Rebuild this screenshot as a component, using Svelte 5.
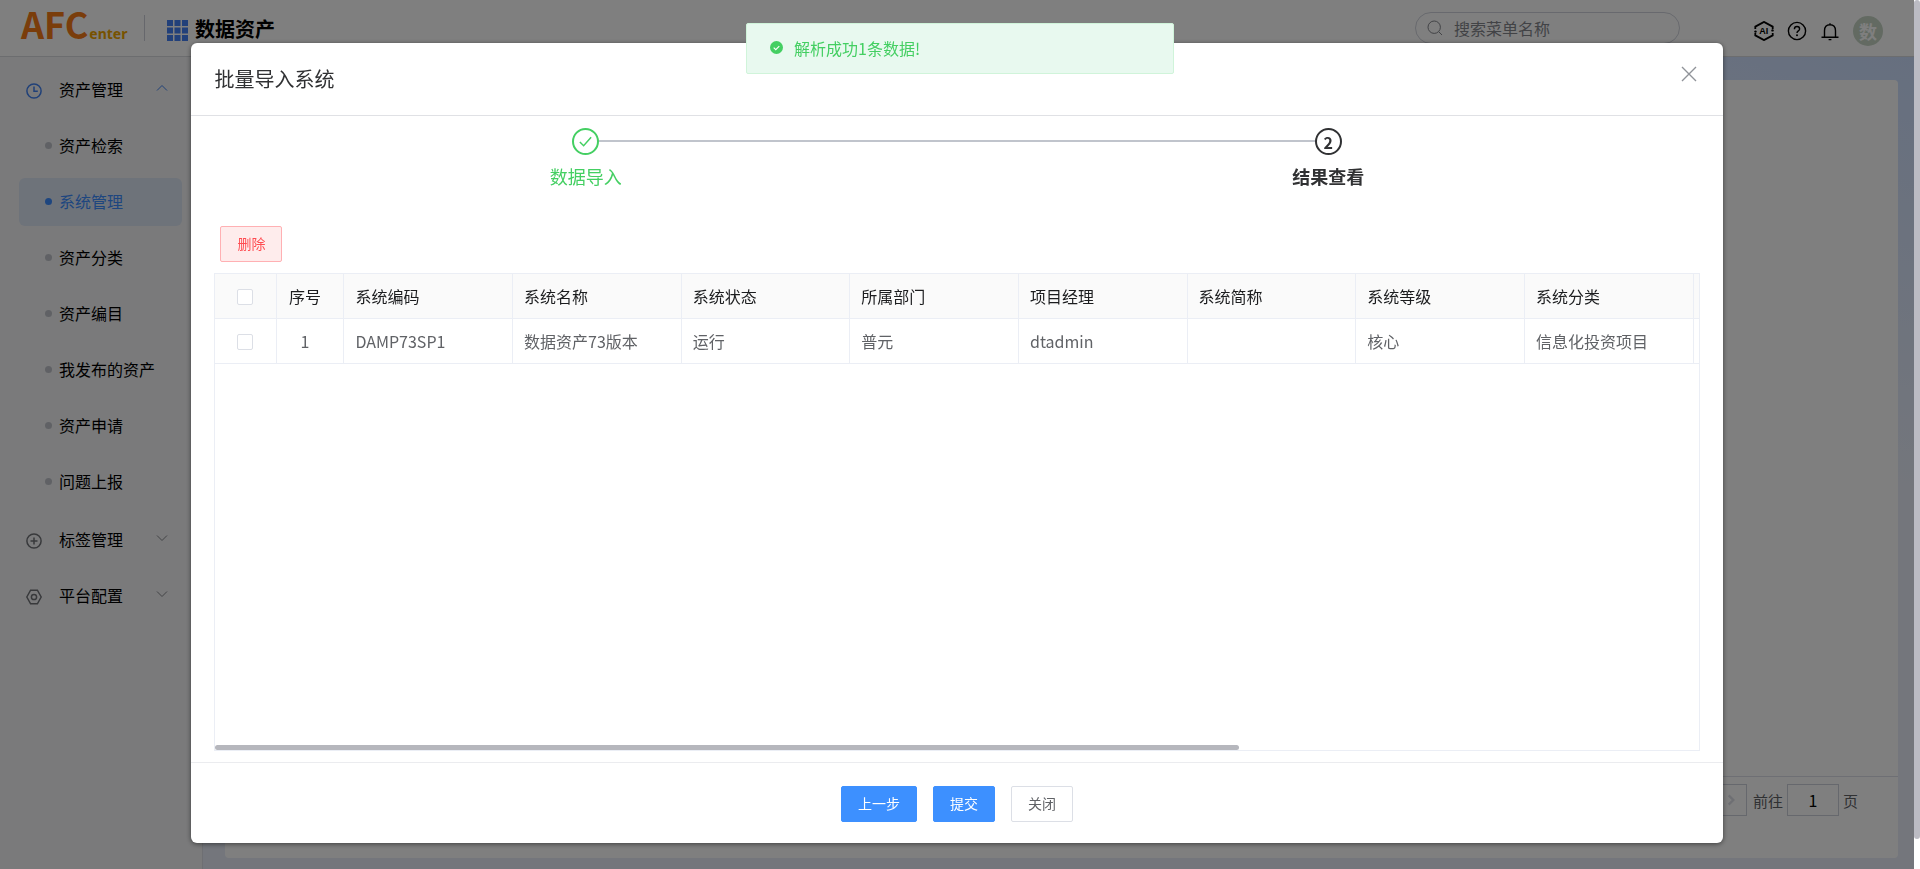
<script lang="ts">
    type Row = { checked: boolean; cells: string[] };

    const subMenus = ["资产检索", "系统管理", "资产分类", "资产编目", "我发布的资产", "资产申请", "问题上报"];
    const columns = ["系统编码", "系统名称", "系统状态", "所属部门", "项目经理", "系统简称", "系统等级", "系统分类"];

    let active = $state("系统管理");
    let opened = $state(true);
    let keyword = $state("");
    let pageNo = $state("1");
    let rows = $state<Row[]>([
        { checked: false, cells: ["DAMP73SP1", "数据资产73版本", "运行", "普元", "dtadmin", "", "核心", "信息化投资项目"] },
    ]);
    let allChecked = $derived(rows.length > 0 && rows.every((r) => r.checked));

    function toggleAll() {
        const next = !allChecked;
        rows.forEach((r) => (r.checked = next));
    }

    function removeChecked() {
        rows = rows.filter((r) => !r.checked);
    }
</script>

{#snippet chevron(up: boolean)}
    <svg class="chevron" class:up viewBox="0 0 12 12"><path d="M1 3.5 6 8.5 11 3.5" /></svg>
{/snippet}

<div class="page">
    <header class="topbar">
        <div class="logo"><span class="logo-main">AFC</span><span class="logo-sub">enter</span></div>
        <div class="divider"></div>
        <svg class="apps" viewBox="0 0 21 21">
            {#each [0, 1, 2] as r}
                {#each [0, 1, 2] as c}
                    <rect x={c * 7.5} y={r * 7.5} width="6" height="6" />
                {/each}
            {/each}
        </svg>
        <h1>数据资产</h1>
        <label class="search">
            <svg viewBox="0 0 16 16"><circle cx="7.2" cy="7.2" r="6.2" /><path d="m11.8 11.8 3.2 3.2" /></svg>
            <input type="text" placeholder="搜索菜单名称" aria-label="搜索菜单名称" bind:value={keyword} />
        </label>
        <nav class="tools">
            <button class="tool" aria-label="AI">
                <svg viewBox="0 0 20 20">
                    <path d="M1.3 8V5.6L10 .9l8.7 4.7V8M1.3 12v2.4L10 19.1l8.7-4.7V12" stroke-width="1.8" />
                    <circle cx="1.5" cy="10.6" r="1.2" class="dot" />
                    <circle cx="18.5" cy="9.4" r="1.2" class="dot" />
                    <text x="9.8" y="13.4">AI</text>
                </svg>
            </button>
            <button class="tool" aria-label="帮助">
                <svg viewBox="0 0 20 20">
                    <circle cx="10" cy="10" r="8.6" />
                    <path d="M7.4 8.2c0-1.6 1.1-2.7 2.6-2.7s2.6 1 2.6 2.4c0 2-2.6 2-2.6 4.1" />
                    <circle cx="10" cy="14.3" r="1" class="dot" />
                </svg>
            </button>
            <button class="tool" aria-label="消息">
                <svg viewBox="0 0 20 20">
                    <path d="M4.5 16V9.8C4.5 6 6.8 3.7 10 3.7s5.5 2.3 5.5 6.1V16M1.5 16.3h17M10 3.7V2.2M8.6 18.6h2.8" />
                </svg>
            </button>
            <span class="avatar">数</span>
        </nav>
    </header>

    <div class="body">
        <aside>
            <button class="group" onclick={() => (opened = !opened)}>
                <svg class="icon blue" viewBox="0 0 16 16"><circle cx="8" cy="8" r="7.1" /><path d="M8 3.6V8.3h3.8" /></svg>
                <span>资产管理</span>
                {@render chevron(opened)}
            </button>
            {#if opened}
                <ul>
                    {#each subMenus as name}
                        <li>
                            <button class="sub" class:active={active === name} onclick={() => (active = name)}>{name}</button>
                        </li>
                    {/each}
                </ul>
            {/if}
            <button class="group">
                <svg class="icon" viewBox="0 0 16 16"><circle cx="8" cy="8" r="7.1" /><path d="M8 4.5v7M4.5 8h7" /></svg>
                <span>标签管理</span>
                {@render chevron(false)}
            </button>
            <button class="group">
                <svg class="icon" viewBox="0 0 16 16"><path d="M4.6 1.2h6.8L15.2 8l-3.8 6.8H4.6L.8 8z" /><circle cx="8" cy="8" r="2.6" /></svg>
                <span>平台配置</span>
                {@render chevron(false)}
            </button>
        </aside>
        <main>
            <section class="panel">
                <div class="pager">
                    <button class="next" aria-label="下一页">
                        <svg viewBox="0 0 12 12"><path d="m4 2 4 4-4 4" /></svg>
                    </button>
                    <label>前往 <input type="text" bind:value={pageNo} /> 页</label>
                </div>
            </section>
        </main>
    </div>
</div>

<div class="track"><div class="thumb"></div></div>

<div class="mask">
    <div class="dialog" role="dialog" aria-labelledby="dialog-title">
        <div class="dialog-head">
            <h2 id="dialog-title">批量导入系统</h2>
            <button class="close" aria-label="关闭对话框">
                <svg viewBox="0 0 16 16"><path d="m1 1 14 14M15 1 1 15" /></svg>
            </button>
        </div>

        <div class="dialog-body">
            <ol class="steps">
                <li class="done">
                    <span class="circle"><svg viewBox="0 0 16 16"><path d="m2 8.5 4 4L14 3.5" /></svg></span>
                    <span class="step-title">数据导入</span>
                </li>
                <li class="current">
                    <span class="circle">2</span>
                    <span class="step-title">结果查看</span>
                </li>
            </ol>

            <button class="btn danger" onclick={removeChecked}>删除</button>

            <div class="table-box">
                <table>
                    <colgroup>
                        <col class="w-check" />
                        <col class="w-index" />
                        {#each columns as _}<col />{/each}
                        <col class="w-gutter" />
                    </colgroup>
                    <thead>
                        <tr>
                            <th class="check"><input type="checkbox" aria-label="全选" checked={allChecked} onchange={toggleAll} /></th>
                            <th class="index">序号</th>
                            {#each columns as title}<th>{title}</th>{/each}
                            <th></th>
                        </tr>
                    </thead>
                    <tbody>
                        {#each rows as row, i}
                            <tr>
                                <td class="check"><input type="checkbox" aria-label="选择第{i + 1}行" bind:checked={row.checked} /></td>
                                <td class="index">{i + 1}</td>
                                {#each row.cells as cell}<td>{cell}</td>{/each}
                                <td></td>
                            </tr>
                        {/each}
                    </tbody>
                </table>
                <div class="h-thumb"></div>
            </div>
        </div>

        <div class="dialog-foot">
            <button class="btn primary">上一步</button>
            <button class="btn primary">提交</button>
            <button class="btn">关闭</button>
        </div>
    </div>
</div>

<div class="toast" role="status">
    <svg viewBox="0 0 14 14"><circle cx="7" cy="7" r="7" /><path d="m4 7.2 2.2 2.2L10 5.4" /></svg>
    <span>解析成功1条数据!</span>
</div>

<style>
    :global(body) {
        overflow: hidden;
        font-family: "Noto Sans CJK SC", "Noto Sans", sans-serif;
        font-size: 16px;
        color: #000;
    }

    button,
    input {
        font: inherit;
        color: inherit;
        box-sizing: border-box;
    }

    button {
        padding: 0;
        border: 0;
        background: none;
        cursor: pointer;
    }

    ul,
    ol {
        margin: 0;
        padding: 0;
        list-style: none;
    }

    svg {
        flex: none;
        fill: none;
        stroke: currentColor;
    }

    .page {
        display: flex;
        flex-direction: column;
        height: 100vh;
        margin-right: 6px;
    }

    /* top bar */
    .topbar {
        display: flex;
        align-items: center;
        box-sizing: border-box;
        height: 57px;
        padding: 0 31px 0 21px;
        border-bottom: 1px solid #d8dade;
        background: #fff;
    }

    .logo {
        display: flex;
        align-items: baseline;
        width: 123px;
        font-weight: bold;
        line-height: 56px;
    }

    .logo-main {
        font-size: 36px;
        color: #f47a16;
    }

    .logo-sub {
        margin-left: 1px;
        font-family: "Noto Sans", sans-serif;
        font-size: 14px;
        color: #efa500;
    }

    .divider {
        width: 1px;
        height: 26px;
        margin-right: 22px;
        background: #ccced8;
    }

    .apps {
        width: 21px;
        height: 21px;
        margin-top: 4px;
        fill: #4480f5;
        stroke: none;
    }

    h1 {
        margin: 0 0 0 7px;
        padding-top: 2px;
        font-size: 20px;
        line-height: 28px;
    }

    .search {
        display: flex;
        align-items: center;
        gap: 11px;
        box-sizing: border-box;
        width: 265px;
        height: 32px;
        margin-left: auto;
        padding: 0 11px;
        border: 1px solid #d0d3dc;
        border-radius: 16px;
        color: #84868c;
    }

    .search svg {
        width: 16px;
        height: 16px;
    }

    .search input {
        flex: 1;
        min-width: 0;
        padding: 0;
        border: 0;
        outline: 0;
        background: none;
    }

    .search input::placeholder {
        color: #84868c;
    }

    .tools {
        display: flex;
        align-items: center;
        gap: 13px;
        margin-left: 74px;
        padding-top: 5px;
    }

    .tool {
        display: flex;
    }

    .tool svg {
        width: 20px;
        height: 20px;
        stroke-width: 1.4;
    }

    .dot {
        fill: currentColor;
        stroke: none;
    }

    .tool text {
        fill: currentColor;
        stroke: none;
        font-family: "Liberation Sans", sans-serif;
        font-size: 9px;
        font-weight: bold;
        text-anchor: middle;
    }

    .avatar {
        width: 30px;
        border-radius: 50%;
        background: #c6d5c5;
        color: #fff;
        font-size: 18px;
        font-weight: bold;
        line-height: 30px;
        text-align: center;
    }

    .body {
        display: flex;
        flex: 1;
        min-height: 0;
    }

    /* side menu */
    aside {
        box-sizing: border-box;
        width: 203px;
        padding: 9px 20px 9px 19px;
        border-right: 1px solid #dcdfe6;
        background: #f4f5f7;
    }

    ul {
        padding-bottom: 2px;
    }

    .group,
    .sub {
        display: flex;
        align-items: center;
        width: 100%;
        height: 48px;
        margin-bottom: 8px;
        padding-bottom: 2px;
        border-radius: 6px;
        text-align: left;
    }

    .group {
        padding-right: 14px;
        padding-left: 7px;
    }

    .group span {
        flex: 1;
        margin-left: 17px;
    }

    .icon {
        width: 16px;
        height: 16px;
        margin-top: 4px;
        color: #707277;
        stroke-width: 1.5;
    }

    .icon.blue {
        color: #4080f0;
    }

    .chevron {
        width: 12px;
        height: 12px;
        margin-bottom: 2px;
        color: #85878c;
    }

    .chevron.up {
        color: #4080f0;
        transform: rotate(180deg);
    }

    .sub {
        gap: 7px;
        padding-left: 26px;
    }

    .sub::before {
        content: "";
        width: 7px;
        height: 7px;
        border-radius: 50%;
        background: #c0c3ca;
    }

    .active {
        background: #dde6f4;
        color: #3c8cff;
    }

    .active::before {
        background: #3c8cff;
    }

    main {
        display: flex;
        flex: 1;
        padding: 23px 16px 11px 22px;
        background: linear-gradient(200deg, #cddfff 0%, #e8edf9 30%, #e8edf9 100%);
    }

    .panel {
        display: flex;
        flex: 1;
        flex-direction: column;
        justify-content: flex-end;
        border-radius: 4px;
        background: #fff;
    }

    .pager {
        display: flex;
        justify-content: flex-end;
        gap: 6px;
        padding: 7px 40px 42px;
        border-top: 1px solid #dcdfe8;
        color: #606266;
        font-size: 15px;
    }

    .pager label {
        display: flex;
        align-items: center;
        gap: 4px;
    }

    .pager input {
        width: 52px;
        height: 32px;
        border: 1px solid #cdd0da;
        background: #fff;
        color: #000;
        font-size: 16px;
        text-align: center;
    }

    .next {
        display: flex;
        align-items: center;
        justify-content: center;
        width: 32px;
        height: 32px;
        border: 1px solid #cdd0da;
        color: #dcdee6;
    }

    .next svg {
        width: 14px;
        height: 14px;
        stroke-width: 2;
    }

    /* page scrollbar */
    .track {
        position: fixed;
        inset: 0 0 0 auto;
        width: 6px;
        background: #fff;
    }

    .thumb {
        height: 96.5%;
        border-radius: 3px;
        background: #bbbbc3;
    }

    /* dialog */
    .mask {
        position: fixed;
        inset: 0 6px 0 0;
        background: rgba(0, 0, 0, 0.5);
    }

    .dialog {
        display: flex;
        flex-direction: column;
        width: 80%;
        height: 92vh;
        margin: 5vh auto 0;
        border-radius: 6px;
        background: #fff;
        box-shadow: 0 1px 5px rgba(0, 0, 0, 0.5);
    }

    .dialog-head {
        display: flex;
        align-items: center;
        justify-content: space-between;
        height: 72px;
        padding: 0 26px 0 23px;
        border-bottom: 1px solid #e0e1e5;
    }

    h2 {
        margin: 0;
        color: #303133;
        font-size: 20px;
        font-weight: normal;
        line-height: 28px;
    }

    .close {
        display: flex;
        margin-bottom: 10px;
        color: #909399;
    }

    .close svg {
        width: 16px;
        height: 16px;
        stroke-width: 1.4;
    }

    .dialog-body {
        display: flex;
        flex: 1;
        flex-direction: column;
        align-items: flex-start;
        min-height: 0;
        padding: 12px 23px 11px;
    }

    .steps {
        display: flex;
        align-self: stretch;
        margin-bottom: 36px;
        font-size: 18px;
    }

    .steps li {
        position: relative;
        display: flex;
        flex: 1;
        flex-direction: column;
        align-items: center;
    }

    .done::after {
        content: "";
        position: absolute;
        top: 12px;
        left: 50%;
        width: 100%;
        height: 2px;
        background: #c0c4cc;
    }

    .circle {
        z-index: 1;
        display: flex;
        align-items: center;
        justify-content: center;
        box-sizing: border-box;
        width: 27px;
        height: 27px;
        border: 2px solid;
        border-radius: 50%;
        background: #fff;
        font-size: 16px;
        line-height: 20px;
    }

    .circle svg {
        width: 15px;
        height: 15px;
        stroke-width: 1.6;
    }

    .step-title {
        margin-top: 7px;
        line-height: 28px;
    }

    .done {
        color: #44cf62;
    }

    .current {
        color: #303133;
        font-weight: bold;
    }

    .btn {
        height: 36px;
        padding: 0 16px 2px;
        border: 1px solid #dcdfe6;
        border-radius: 2px;
        color: #606266;
        font-size: 14px;
    }

    .danger {
        margin: 0 0 11px 6px;
        border-color: #ffb0b3;
        background: #feecec;
        color: #ff4d52;
    }

    .primary {
        border-color: #3d90ff;
        background: #3d90ff;
        color: #fff;
    }

    .table-box {
        display: flex;
        flex: 1;
        flex-direction: column;
        justify-content: space-between;
        align-self: stretch;
        border: 1px solid #ebeef5;
    }

    table {
        width: 100%;
        border-collapse: separate;
        border-spacing: 0;
        table-layout: fixed;
    }

    .w-check {
        width: 62px;
    }

    .w-index {
        width: 67px;
    }

    .w-gutter {
        width: 5px;
    }

    th,
    td {
        box-sizing: border-box;
        height: 45px;
        padding: 0 0 1px 11px;
        border-right: 1px solid #ebeef5;
        border-bottom: 1px solid #ebeef5;
        line-height: 24px;
        text-align: left;
        white-space: nowrap;
    }

    th:last-child,
    td:last-child {
        padding: 0;
        border-right: 0;
    }

    th {
        background: #fafafa;
        color: #1c1d1f;
        font-weight: normal;
    }

    td {
        color: #606266;
    }

    .check {
        padding: 1px 2px 0 0;
    }

    .index {
        padding: 0 11px 1px 0;
        text-align: center;
    }

    input[type="checkbox"] {
        display: block;
        width: 16px;
        height: 16px;
        margin: 0 auto;
        border: 1px solid #dcdfe6;
        border-radius: 2px;
        background: #fff;
        appearance: none;
    }

    input[type="checkbox"]:checked {
        border-color: #3d90ff;
        background: #3d90ff;
    }

    .h-thumb {
        width: 69%;
        height: 5px;
        border-radius: 3px;
        background: #b6b7bd;
    }

    .dialog-foot {
        display: flex;
        justify-content: center;
        gap: 16px;
        padding: 23px 0 21px;
        border-top: 1px solid #ebecef;
    }

    /* success message */
    .toast {
        position: fixed;
        top: 23px;
        left: 50%;
        display: flex;
        align-items: center;
        gap: 11px;
        box-sizing: border-box;
        width: 428px;
        height: 51px;
        padding: 0 23px 2px;
        border: 1px solid #d0f4da;
        border-radius: 2px;
        background: #e8f9ef;
        color: #44cf62;
        transform: translateX(-50%);
    }

    .toast svg {
        width: 13px;
        height: 13px;
        fill: currentColor;
        stroke: none;
    }

    .toast path {
        fill: none;
        stroke: #fff;
        stroke-width: 1.2;
    }
</style>
